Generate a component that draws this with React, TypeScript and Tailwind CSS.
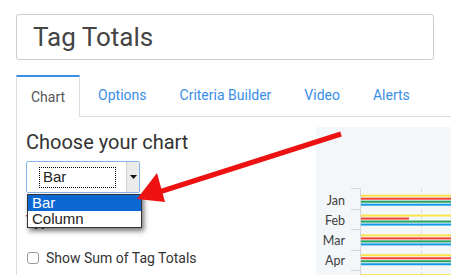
import React from 'react';

const tabs = ['Chart', 'Options', 'Criteria Builder', 'Video', 'Alerts'];
const months = ['Jan', 'Feb', 'Mar', 'Apr'];
const series = ['#fbe44a', '#f34235', '#24a35a', '#129ae6'];

function BarChart() {
  return (
    <svg width="135" height="148" className="block">
      <line x1="105.5" y1="61" x2="105.5" y2="148" stroke="#dcdcdc" strokeWidth="1" strokeDasharray="4 3" />
      {[0, 1, 2, 3, 4].map((i) => {
        const top = 67.7 + i * 19.85;
        return series.map((color, j) => (
          <rect
            key={`${i}-${j}`}
            x="45"
            y={top + j * 3}
            width={i === 1 && j === 1 ? 48 : 95}
            height="2"
            fill={color}
          />
        ));
      })}
      <line x1="44.5" y1="61" x2="44.5" y2="148" stroke="#d6d6d6" strokeWidth="1" />
      {[0, 1, 2, 3, 4].map((i) => {
        const y = Math.round(61 + i * 20.6) + 0.5;
        return <line key={i} x1="35" y1={y} x2="44" y2={y} stroke="#d6d6d6" strokeWidth="1" />;
      })}
      {months.map((m, i) => (
        <text
          key={m}
          x="29"
          y={73 + i * 20}
          textAnchor="end"
          dominantBaseline="central"
          fontFamily="Lato, sans-serif"
          fontSize="12.5"
          fill="#3d3d3d"
        >
          {m}
        </text>
      ))}
    </svg>
  );
}

export default function App() {
  return (
    <div className="relative w-[451px] h-[275px] overflow-hidden bg-white font-['Roboto',sans-serif]">
      <div className="ml-[16px] mt-[14px] w-[418px] h-[46px] border border-[#cccccc] rounded-[3px] flex items-center pl-[16px]">
        <span className="text-[26px] text-[#444] leading-none">Tag Totals</span>
      </div>

      <div className="mt-[15px] ml-[16px] h-[42px] border-b border-[#dddddd] flex">
        {tabs.map((t, i) =>
          i === 0 ? (
            <div
              key={t}
              className="h-[42px] -mb-px bg-white border-x border-t-2 border-x-[#dddddd] border-t-[#3a8ee6] px-[14px] flex items-center text-[14px] text-[#555]"
            >
              {t}
            </div>
          ) : (
            <div key={t} className="ml-[3px] px-[15px] flex items-center text-[14px] text-[#3a8ee6]">
              {t}
            </div>
          )
        )}
      </div>

      <div className="flex ml-[16px] h-[158px]">
        <div className="w-[300px] border-l border-[#dddddd] pl-[9px] pt-[13px]">
          <h2 className="text-[20px] leading-[24px] text-[#333]">Choose your chart</h2>
          <div className="mt-[7px] w-[114px] h-[32px] border border-[#86b6e9] rounded-[2px] flex bg-white">
            <div className="flex-1 flex items-center pl-[12px]">
              <div className="w-[77px] h-[21px] border border-dotted border-black flex items-center pl-[3px] font-['Liberation_Sans',sans-serif] text-[15px] text-[#222]">
                Bar
              </div>
            </div>
            <div className="w-[13px] bg-[#ebebeb] border-l border-[#d0d0d0] flex items-center justify-center">
              <svg width="7" height="4" viewBox="0 0 7 4">
                <path d="M0 0h7L3.5 4z" fill="#111" />
              </svg>
            </div>
          </div>
          <div className="mt-[18px] text-[14px] leading-[20px] font-semibold text-[#333]">Type</div>
          <label className="mt-[17px] h-[20px] flex items-center gap-[7px] text-[14px] text-[#333]">
            <span className="ml-[1px] w-[12px] h-[12px] border border-[#999] rounded-[3px] bg-white" />
            Show Sum of Tag Totals
          </label>
        </div>
        <div className="flex-1 mt-[10px] bg-[#f4f7fa]">
          <BarChart />
        </div>
      </div>

      <div className="absolute left-[27px] top-[194px] w-[115px] h-[34px] bg-white border border-[#333] shadow-[2px_3px_5px_rgba(0,0,0,0.55)] font-['Liberation_Sans',sans-serif] text-[15px] leading-[16px]">
        <div className="h-[16px] bg-[#0b68d3] text-white pl-[4px]">Bar</div>
        <div className="h-[16px] text-[#222] pl-[4px]">Column</div>
      </div>

      <svg className="absolute left-0 top-0 pointer-events-none" width="451" height="275">
        <line x1="341" y1="134" x2="156" y2="193" stroke="#ee1111" strokeWidth="5" />
        <polygon points="137,199 157,173 165,202" fill="#ee1111" />
      </svg>
    </div>
  );
}
